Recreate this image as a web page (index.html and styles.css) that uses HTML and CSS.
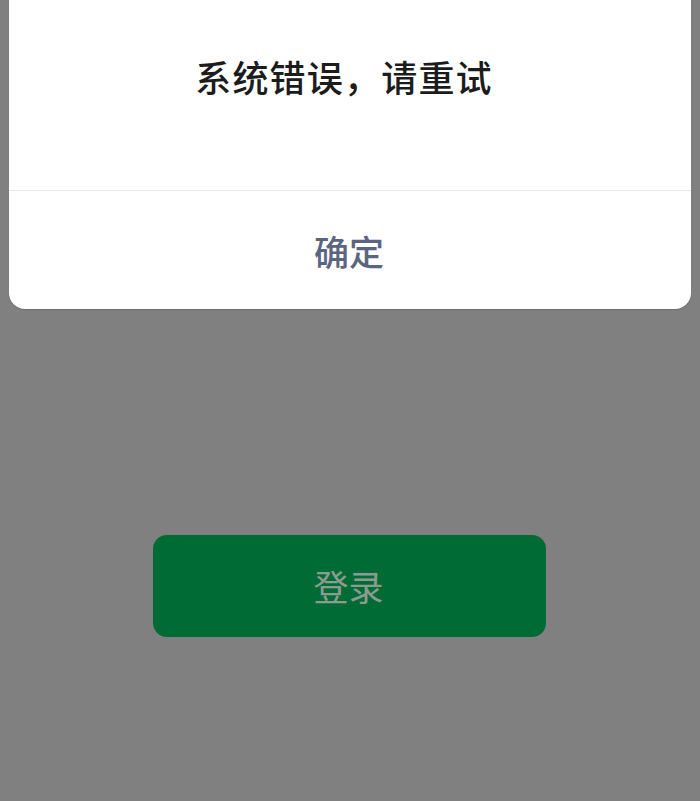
FILE: index.html
```html
<!DOCTYPE html>
<html lang="zh">
<head>
<meta charset="utf-8">
<link rel="stylesheet" href="styles.css">
</head>
<body>
<div class="dialog">
  <div class="dialog-body">系统错误，请重试</div>
  <div class="dialog-footer">确定</div>
</div>
<div class="login">
  <div class="login-btn">登录</div>
</div>
</body>
</html>
```
FILE: styles.css
```css
html, body {
  margin: 0;
  padding: 0;
  height: 100%;
}
body {
  background: #808080;
  font-family: "Noto Sans CJK SC", "Noto Sans", sans-serif;
  display: flex;
  flex-direction: column;
  align-items: center;
}
.dialog {
  width: 682px;
  background: #ffffff;
  border-radius: 0 0 16px 16px;
  box-shadow: 0 1px 1px rgba(0,0,0,0.15);
  display: flex;
  flex-direction: column;
}
.dialog-body {
  height: 191px;
  box-sizing: border-box;
  padding-top: 51px;
  padding-right: 12px;
  text-align: center;
  font-size: 36px;
  line-height: 50px;
  font-weight: 500;
  color: #1c1c1c;
  letter-spacing: 1.2px;
  border-bottom: 1px solid #e6e6e6;
}
.dialog-footer {
  height: 118px;
  display: flex;
  align-items: center;
  justify-content: center;
  padding-right: 2px;
  box-sizing: border-box;
  font-size: 35px;
  font-weight: 500;
  color: #5a6581;
}
.login {
  margin-top: 226px;
  display: flex;
  justify-content: center;
}
.login-btn {
  width: 393px;
  height: 102px;
  margin-right: 1px;
  background: #006b35;
  border-radius: 14px;
  display: flex;
  align-items: center;
  justify-content: center;
  padding-right: 2px;
  padding-bottom: 2px;
  box-sizing: border-box;
  font-size: 35px;
  color: #8c9b8f;
}
```
